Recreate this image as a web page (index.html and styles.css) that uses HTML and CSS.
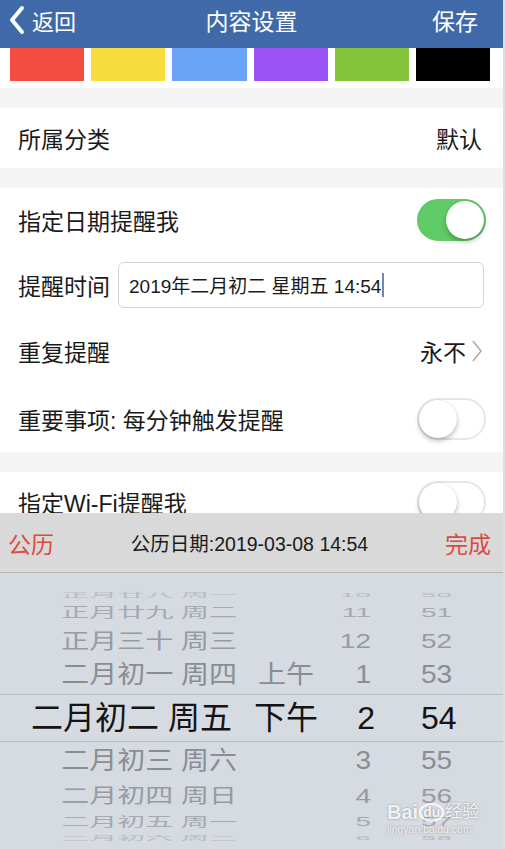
FILE: index.html
```html
<!DOCTYPE html>
<html lang="zh-CN">
<head>
    <meta charset="UTF-8">
    <meta name="viewport" content="width=device-width, initial-scale=1.0">
    <title>内容设置</title>
    <link rel="stylesheet" href="styles.css">
</head>
<body>
<div class="app">
    <!-- Nav Bar -->
    <header class="navbar">
        <div class="nav-back">
            <svg class="back-icon" width="16" height="30" viewBox="0 0 16 30">
                <path d="M13 3 L3 15 L13 27" fill="none" stroke="#fff" stroke-width="4" stroke-linecap="round" stroke-linejoin="round"/>
            </svg>
            <span>返回</span>
        </div>
        <div class="nav-title">内容设置</div>
        <div class="nav-save">保存</div>
    </header>

    <!-- Colour Swatches -->
    <div class="swatches">
        <div class="swatch red"></div>
        <div class="swatch yellow"></div>
        <div class="swatch blue"></div>
        <div class="swatch purple"></div>
        <div class="swatch green"></div>
        <div class="swatch black"></div>
    </div>

    <div class="group">
        <div class="row row-category">
            <span class="label">所属分类</span>
            <span class="value">默认</span>
        </div>
    </div>

    <div class="group">
        <div class="row row-date">
            <span class="label">指定日期提醒我</span>
            <span class="switch on"><span class="knob"></span></span>
        </div>
        <div class="row row-time">
            <span class="label">提醒时间</span>
            <div class="time-input">2019年二月初二 星期五 14:54<span class="caret"></span></div>
        </div>
        <div class="row row-repeat">
            <span class="label">重复提醒</span>
            <span class="value">永不
                <svg class="chevron" width="12" height="24" viewBox="0 0 12 24">
                    <path d="M2 2 L10 12 L2 22" fill="none" stroke="#aaa" stroke-width="1.5"/>
                </svg>
            </span>
        </div>
        <div class="row row-important">
            <span class="label">重要事项: 每分钟触发提醒</span>
            <span class="switch"><span class="knob"></span></span>
        </div>
    </div>

    <div class="group">
        <div class="row row-wifi">
            <span class="label">指定Wi-Fi提醒我</span>
            <span class="switch"><span class="knob"></span></span>
        </div>
    </div>
</div>

<!-- Date Picker Sheet -->
<div class="sheet">
    <div class="toolbar">
        <span class="tb-btn">公历</span>
        <span class="tb-title">公历日期:2019-03-08 14:54</span>
        <span class="tb-btn">完成</span>
    </div>
    <div class="picker">
        <div class="prow r4">
            <span class="c-date">正月廿八 周一</span><span class="c-ampm"></span><span class="c-hour">10</span><span class="c-min">50</span>
        </div>
        <div class="prow r3">
            <span class="c-date">正月廿九 周二</span><span class="c-ampm"></span><span class="c-hour">11</span><span class="c-min">51</span>
        </div>
        <div class="prow r2">
            <span class="c-date">正月三十 周三</span><span class="c-ampm"></span><span class="c-hour">12</span><span class="c-min">52</span>
        </div>
        <div class="prow r1">
            <span class="c-date">二月初一 周四</span><span class="c-ampm">上午</span><span class="c-hour">1</span><span class="c-min">53</span>
        </div>
        <div class="prow selected">
            <span class="c-date">二月初二 周五</span><span class="c-ampm">下午</span><span class="c-hour">2</span><span class="c-min">54</span>
        </div>
        <div class="prow r1 b">
            <span class="c-date">二月初三 周六</span><span class="c-ampm"></span><span class="c-hour">3</span><span class="c-min">55</span>
        </div>
        <div class="prow r2 b">
            <span class="c-date">二月初四 周日</span><span class="c-ampm"></span><span class="c-hour">4</span><span class="c-min">56</span>
        </div>
        <div class="prow r3 b">
            <span class="c-date">二月初五 周一</span><span class="c-ampm"></span><span class="c-hour">5</span><span class="c-min">57</span>
        </div>
        <div class="prow r4 b">
            <span class="c-date">二月初六 周二</span><span class="c-ampm"></span><span class="c-hour">6</span><span class="c-min">58</span>
        </div>

        <!-- watermark -->
        <div class="watermark">
            <div class="wm-main">Bai<span class="wm-du">du</span><span class="wm-cn">经验</span></div>
            <div class="wm-url">jingyan.baidu.com</div>
        </div>
    </div>
</div>
</body>
</html>
```

FILE: styles.css
```css
body {
    margin: 0;
    background-color: #dedede;
    font-family: "Liberation Sans", "Noto Sans CJK SC", sans-serif;
    color: #1a1a1a;
}

.app {
    width: 503px;
    height: 849px;
    background-color: #f4f4f4;
    overflow: hidden;
}

/* Nav Bar */
.navbar {
    height: 48px;
    box-sizing: border-box;
    padding: 0 25px 8px 9px;
    background-color: #4069a9;
    color: #fff;
    font-size: 23px;
    display: flex;
    align-items: center;
    justify-content: space-between;
    position: relative;
}

.nav-back {
    display: flex;
    align-items: center;
    gap: 7px;
    font-size: 22px;
}

.back-icon {
    display: block;
}

.nav-title {
    position: absolute;
    left: 0;
    right: 0;
    top: 0;
    bottom: 8px;
    display: flex;
    align-items: center;
    justify-content: center;
    pointer-events: none;
}

/* Swatches */
.swatches {
    height: 40px;
    box-sizing: border-box;
    padding: 0 13px 7px 10px;
    background-color: #fff;
    display: flex;
    gap: 7px;
}

.swatch {
    flex: 1;
    height: 33px;
}

.red { background-color: #f54c41; }
.yellow { background-color: #f9dc3d; }
.blue { background-color: #6ba4f6; }
.purple { background-color: #9a52f4; }
.green { background-color: #84c43b; }
.black { background-color: #000; }

/* Groups & Rows */
.group {
    margin-top: 20px;
    background-color: #fff;
}

.row {
    display: flex;
    align-items: center;
    justify-content: space-between;
    padding: 0 17px 0 18px;
    font-size: 23px;
}

.row-category { height: 60px; padding-right: 21px; }
.row-date { height: 64px; }
.row-time { height: 65px; justify-content: flex-start; padding-right: 19px; }
.row-repeat { height: 68px; padding-right: 20px; }
.row-important { height: 67px; }
.row-wifi { height: 60px; }

.value {
    display: flex;
    align-items: center;
    gap: 5px;
}

.chevron {
    display: block;
}

/* Time input */
.time-input {
    flex: 1;
    margin-left: 8px;
    height: 46px;
    box-sizing: border-box;
    border: 1px solid #d3d3d3;
    border-radius: 6px;
    padding-left: 10px;
    font-size: 19px;
    display: flex;
    align-items: center;
    white-space: pre;
}

.caret {
    display: inline-block;
    width: 2px;
    height: 24px;
    margin-left: 1px;
    background-color: #6d8ab5;
}

/* Switches */
.switch {
    width: 69px;
    height: 42px;
    box-sizing: border-box;
    border: 2px solid #e6e6e6;
    border-radius: 21px;
    background-color: #fff;
    position: relative;
    flex-shrink: 0;
}

.switch .knob {
    position: absolute;
    top: 0;
    left: 0;
    width: 38px;
    height: 38px;
    border-radius: 50%;
    background-color: #fff;
    box-shadow: 0 3px 5px rgba(0,0,0,0.25), 0 0 1px rgba(0,0,0,0.15);
}

.switch.on {
    border-color: #5fcb66;
    background-color: #5fcb66;
}

.switch.on .knob {
    left: auto;
    right: 0;
}

/* Picker Sheet */
.sheet {
    position: fixed;
    left: 0;
    bottom: 0;
    width: 503px;
    height: 336px;
}

.toolbar {
    height: 59px;
    border-bottom: 1px solid #b6b6b6;
    background-color: #d9d9d9;
    display: flex;
    align-items: center;
    justify-content: space-between;
    padding: 0 12px 0 8px;
}

.tb-btn {
    color: #dd4a42;
    font-size: 23px;
}

.tb-title {
    font-size: 19.5px;
    color: #1a1a1a;
}

.picker {
    height: 276px;
    box-sizing: border-box;
    padding-top: 17px;
    background-color: #d6dae1;
    position: relative;
    overflow: hidden;
}

.prow {
    display: grid;
    grid-template-columns: 240px 92px 43px 1fr;
    font-size: 28px;
    color: #8a8e94;
    white-space: nowrap;
}

.prow .c-date {
    text-align: right;
    padding-right: 3px;
}

.prow .c-ampm {
    text-align: center;
}

.prow .c-hour {
    text-align: right;
    padding-right: 4px;
}

.prow .c-min {
    padding-left: 46px;
}

.r4 { height: 10px; line-height: 10px; transform: scaleY(0.22); color: #b8bcc2; }
.r3 { height: 26px; line-height: 26px; transform: scaleY(0.48); color: #a6aab0; }
.r2 { height: 30px; line-height: 30px; transform: scaleY(0.75); color: #979ba1; }
.r1 { height: 38px; line-height: 38px; transform: scaleY(0.9); }
.r1.b { height: 38px; line-height: 38px; }
.r2.b { height: 34px; line-height: 34px; transform: scaleY(0.72); }
.r3.b { height: 16px; line-height: 16px; transform: scaleY(0.45); }
.r4.b { height: 16px; line-height: 16px; transform: scaleY(0.2); }

.prow.selected {
    height: 46px;
    line-height: 46px;
    border-top: 1px solid #b9bdc4;
    border-bottom: 1px solid #b9bdc4;
    font-size: 32px;
    color: #141414;
}

.prow.selected .c-date {
    padding-right: 8px;
}

.prow.selected .c-hour {
    padding-right: 0;
}

/* Watermark */
.watermark {
    position: absolute;
    left: 387px;
    top: 229px;
    color: rgba(255,255,255,0.9);
    text-shadow: 0 0 2px rgba(80,80,80,0.6);
}

.wm-main {
    display: flex;
    align-items: center;
    font-size: 20px;
    font-weight: bold;
    line-height: 20px;
}

.wm-du {
    display: inline-block;
    margin: 0 1px;
    padding: 0 2px;
    border-radius: 50%;
    border: 2px solid rgba(255,255,255,0.8);
    line-height: 15px;
    font-size: 14px;
}

.wm-cn {
    font-size: 17px;
    font-weight: normal;
}

.wm-url {
    font-size: 10.5px;
    line-height: 12px;
    margin-top: 1px;
}
```
